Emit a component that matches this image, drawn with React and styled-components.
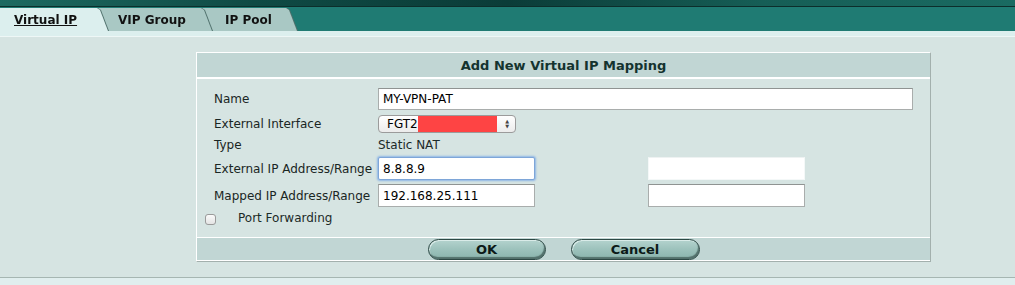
import React from "react";
import styled, { createGlobalStyle } from "styled-components";

const Global = createGlobalStyle`
  html, body { margin: 0; padding: 0; background: #e0eeee; }
  body { font-family: "DejaVu Sans", Verdana, sans-serif; font-size: 12px; color: #1c2a28; }
`;

const Page = styled.div`
  width: 1015px;
  height: 285px;
  overflow: hidden;
  background: #e0eeee;
`;

const TopBand = styled.div`
  height: 6px;
  background: linear-gradient(90deg, #1d6a61 0%, #0f4a44 25%, #0b3c38 50%, #165e56 75%, #1a6b62 100%);
  border-bottom: 1px solid #0c2e2b;
`;

const TabBar = styled.div`
  height: 24px;
  background: #1f7b73;
  display: flex;
  align-items: flex-end;
`;

const TabWrap = styled.div`
  position: relative;
  z-index: ${(p) => p.$z};
  margin-left: ${(p) => p.$ml}px;
  filter: drop-shadow(1px 0 0 #4f6f6b);
`;

const Tab = styled.div`
  height: 23px;
  width: ${(p) => p.$w}px;
  box-sizing: border-box;
  padding-left: ${(p) => p.$pl}px;
  display: flex;
  align-items: center;
  font-weight: bold;
  font-size: 12px;
  color: #111;
  background: ${(p) => (p.$active ? "#dcefee" : "#a9c8c4")};
  clip-path: polygon(0 0, calc(100% - 11px) 0, calc(100% - 8px) 2px, 100% 100%, 0 100%);
  text-decoration: ${(p) => (p.$active ? "underline" : "none")};
`;

const Strip = styled.div`
  height: 5px;
  background: #dcefee;
  border-bottom: 1px solid #eef7f6;
`;

const Main = styled.div`
  background: #d6e4e2;
  height: 241px;
  box-sizing: border-box;
  padding: 15px 0 0 196px;
  border-bottom: 1px solid #a6b6b2;
`;

const Dialog = styled.div`
  width: 735px;
  box-sizing: border-box;
  border-top: 1px solid #fff;
  border-left: 1px solid #fff;
  border-right: 1px solid #a3b0ad;
  border-bottom: 1px solid #a3b0ad;
  background: #d6e4e2;
`;

const Header = styled.div`
  height: 24px;
  background: #c1d6d4;
  border-bottom: 2px solid #fff;
  display: flex;
  align-items: center;
  justify-content: center;
  font-weight: bold;
  font-size: 13px;
  color: #14332f;
`;

const Body = styled.div`
  padding: 9px 0 11px 17px;
  display: flex;
  flex-direction: column;
`;

const Row = styled.div`
  display: flex;
  align-items: center;
  height: ${(p) => p.$h}px;
  margin-top: ${(p) => p.$mt || 0}px;
`;

const Label = styled.div`
  width: 164px;
  flex: none;
  white-space: nowrap;
  color: #1a2624;
`;

const Input = styled.div`
  box-sizing: border-box;
  width: ${(p) => p.$w}px;
  height: ${(p) => p.$h || 23}px;
  margin-left: ${(p) => p.$ml || 0}px;
  background: #fff;
  border: 1px solid ${(p) => (p.$focus ? "#7ea6d8" : p.$faint ? "#f4f8f8" : "#a9adac")};
  border-top-color: ${(p) => (p.$focus ? "#7ea6d8" : p.$faint ? "#eef2f2" : "#8f9392")};
  box-shadow: ${(p) => (p.$focus ? "0 0 2px 1px #8fb6e6" : "none")};
  border-radius: ${(p) => (p.$focus ? "2px" : "0")};
  padding-left: 4px;
  display: flex;
  align-items: center;
  color: #000;
  font-size: 12px;
`;

const Select = styled.div`
  box-sizing: border-box;
  width: 138px;
  height: 18px;
  border: 1px solid #9b9b9b;
  border-radius: 4px;
  background: linear-gradient(#ffffff, #ececec);
  display: flex;
  align-items: center;
  padding-left: 8px;
  font-size: 12px;
  color: #000;
`;

const Redact = styled.span`
  display: inline-block;
  width: 79px;
  height: 16px;
  background: #fe4444;
`;

const Arrows = styled.span`
  margin-left: auto;
  margin-right: 6px;
  display: flex;
  flex-direction: column;
  font-size: 5px;
  line-height: 5px;
  color: #444;
`;

const CheckRow = styled.div`
  display: flex;
  align-items: center;
  height: 16px;
  margin-top: 3px;
  margin-left: -9px;
`;

const Box = styled.span`
  width: 11px;
  height: 11px;
  box-sizing: border-box;
  border: 1px solid #9a9a9a;
  border-radius: 3px;
  background: linear-gradient(#fafafa, #e4e4e4);
  margin-right: 22px;
  margin-top: 3px;
`;

const Footer = styled.div`
  border-top: 1px solid #fff;
  border-bottom: 1px solid #fff;
  background: #c1d6d4;
  height: 22px;
  display: flex;
  justify-content: center;
  align-items: center;
  gap: 25px;
`;

const Button = styled.div`
  width: ${(p) => p.$w}px;
  height: 21px;
  box-sizing: border-box;
  border-radius: 11px;
  border: 1px solid #2c4844;
  background: linear-gradient(#b4d3ce 0%, #9ec3bd 45%, #8ab4ad 100%);
  box-shadow: inset -1px -2px 1px #52706b, inset 1px 1px 0 #d9ebe8;
  display: flex;
  align-items: center;
  justify-content: center;
  font-weight: bold;
  font-size: 13px;
  color: #0c1a18;
`;

export default function App() {
  return (
    <Page>
      <Global />
      <TopBand />
      <TabBar>
        <TabWrap $z={3} $ml={0}>
          <Tab $active $w={108} $pl={14}>Virtual IP</Tab>
        </TabWrap>
        <TabWrap $z={2} $ml={-10}>
          <Tab $w={114} $pl={20}>VIP Group</Tab>
        </TabWrap>
        <TabWrap $z={1} $ml={-10}>
          <Tab $w={95} $pl={23}>IP Pool</Tab>
        </TabWrap>
      </TabBar>
      <Strip />
      <Main>
        <Dialog>
          <Header>Add New Virtual IP Mapping</Header>
          <Body>
            <Row $h={22}>
              <Label>Name</Label>
              <Input $w={535} $h={22}>MY-VPN-PAT</Input>
            </Row>
            <Row $h={18} $mt={5}>
              <Label>External Interface</Label>
              <Select>
                FGT2
                <Redact />
                <Arrows>
                  <span>▲</span>
                  <span>▼</span>
                </Arrows>
              </Select>
            </Row>
            <Row $h={18} $mt={3}>
              <Label>Type</Label>
              <span>Static NAT</span>
            </Row>
            <Row $h={23} $mt={3}>
              <Label>External IP Address/Range</Label>
              <Input $w={157} $focus>8.8.8.9</Input>
              <Input $w={157} $ml={113} $faint />
            </Row>
            <Row $h={23} $mt={4}>
              <Label>Mapped IP Address/Range</Label>
              <Input $w={157}>192.168.25.111</Input>
              <Input $w={157} $ml={113} />
            </Row>
            <CheckRow>
              <Box />
              Port Forwarding
            </CheckRow>
          </Body>
          <Footer>
            <Button $w={118}>OK</Button>
            <Button $w={129}>Cancel</Button>
          </Footer>
        </Dialog>
      </Main>
    </Page>
  );
}
